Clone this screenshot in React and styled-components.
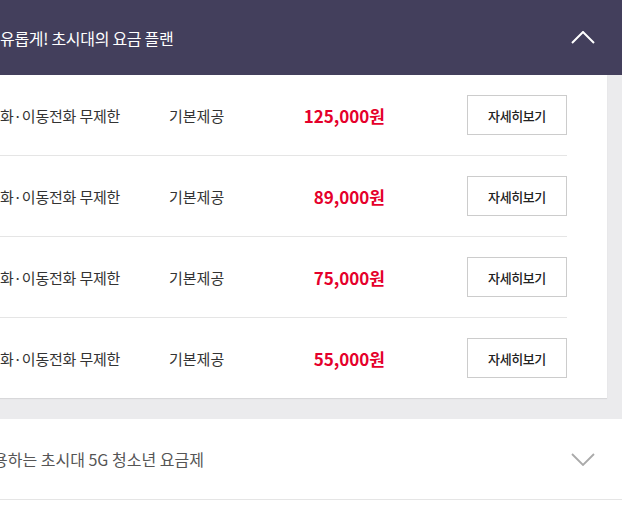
import React from "react";
import styled, { createGlobalStyle } from "styled-components";

const Global = createGlobalStyle`
  html, body { margin: 0; padding: 0; background: #fff; }
  body { overflow: hidden; font-family: "Noto Sans CJK KR", "Noto Sans", sans-serif; }
`;

const Page = styled.div`
  width: 622px;
  overflow: hidden;
`;

const Header = styled.div`
  height: 75px;
  background: #433f5c;
  display: flex;
  align-items: center;
  justify-content: space-between;
  padding-right: 27px;
`;

const HeaderTitle = styled.h2`
  margin: 0;
  color: #fff;
  font-size: 16px;
  font-weight: 400;
  letter-spacing: -0.3px;
  white-space: nowrap;
`;

const Panel = styled.div`
  background: #ebebed;
  padding: 0 15px 21px 0;
`;

const Card = styled.div`
  background: #fff;
  padding-right: 40px;
  box-shadow: 0 1px 1px rgba(0, 0, 0, 0.08);
`;

const Row = styled.div`
  height: 80px;
  display: grid;
  grid-template-columns: 169px 80px 136px 1fr 100px;
  align-items: center;
  border-bottom: ${(p) => (p.$last ? "none" : "1px solid #e5e5e5")};
`;

const Feature = styled.span`
  font-size: 15px;
  letter-spacing: -0.2px;
  color: #333;
  white-space: nowrap;
`;

const Data = styled.span`
  font-size: 15px;
  color: #333;
  white-space: nowrap;
`;

const Price = styled.span`
  font-size: 17px;
  font-weight: 700;
  color: #e5002b;
  text-align: right;
  white-space: nowrap;
`;

const DetailButton = styled.button`
  grid-column: 5;
  width: 100px;
  height: 40px;
  box-sizing: border-box;
  border: 1px solid #cccccc;
  background: #fff;
  font-family: inherit;
  font-size: 13px;
  font-weight: 500;
  letter-spacing: -0.4px;
  color: #222;
  padding: 0;
  cursor: pointer;
`;

const Section = styled.div`
  height: 80px;
  background: #fff;
  border-bottom: 1px solid #e5e5e5;
  display: flex;
  align-items: center;
  justify-content: space-between;
  padding-right: 27px;
`;

const SectionTitle = styled.span`
  font-size: 16px;
  color: #555;
  white-space: nowrap;
  text-indent: -7px;
  display: block;
`;

const Chevron = ({ up, color, width = 2 }) => (
  <svg width="24" height="13" viewBox="0 0 24 13" fill="none">
    <polyline
      points={up ? "1,12 12,1 23,12" : "1,1 12,12 23,1"}
      stroke={color}
      strokeWidth={width}
    />
  </svg>
);

const plans = ["125,000원", "89,000원", "75,000원", "55,000원"];

export default function App() {
  return (
    <Page>
      <Global />
      <Header>
        <HeaderTitle>유롭게! 초시대의 요금 플랜</HeaderTitle>
        <Chevron up color="#fff" />
      </Header>
      <Panel>
        <Card>
          {plans.map((p, i) => (
            <Row key={p} $last={i === plans.length - 1}>
              <Feature>화·이동전화 무제한</Feature>
              <Data>기본제공</Data>
              <Price>{p}</Price>
              <DetailButton>자세히보기</DetailButton>
            </Row>
          ))}
        </Card>
      </Panel>
      <Section>
        <SectionTitle>용하는 초시대 5G 청소년 요금제</SectionTitle>
        <Chevron color="#aaa" width={1.8} />
      </Section>
    </Page>
  );
}
